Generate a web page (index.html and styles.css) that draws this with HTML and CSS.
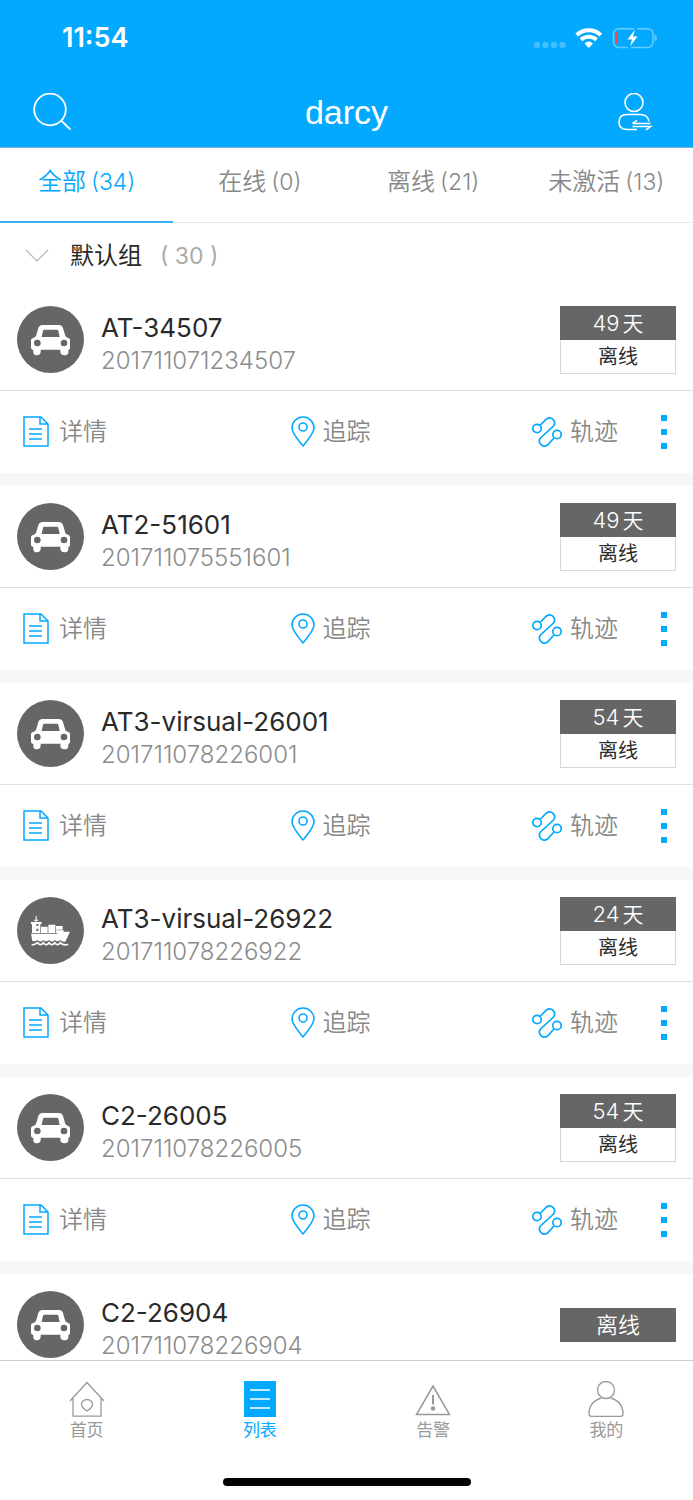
FILE: index.html
```html
<!DOCTYPE html>
<html lang="zh-CN">
<head>
<meta charset="utf-8">
<meta name="viewport" content="width=device-width, initial-scale=1">
<title>darcy</title>
<link rel="stylesheet" href="styles.css">
</head>
<body>
<svg class="sprite" aria-hidden="true">
  <symbol id="car" viewBox="0 0 201 201">
    <path fill="#fff" fill-rule="evenodd" d="M77 57H125Q135 57 138 66L145 90Q148 95 154 96Q159 97 159 103V127Q159 131 154 132V140Q152 148 142 148Q132 148 130 139V131H71V139Q69 148 60 148Q51 148 49 140V132Q42 131 42 126V103Q42 97 48 96Q54 95 57 90L64 66Q67 57 77 57ZM82 71Q79 71 78 74L74 93H128L124 74Q123 71 120 71Z"/>
    <circle cx="61" cy="111" r="10" fill="#666"/><circle cx="141" cy="111" r="10" fill="#666"/>
  </symbol>
  <symbol id="ship" viewBox="0 0 201 201">
    <path fill="#fff" d="M56 57h3v11h5v3h-5v4h16l-3 7h-2v26H45V82h-2l-2-7h15v-4h-5v-3h5z"/>
    <path fill="#fff" d="M72 89h20v19H72zM94 83h21v25H94zM117 87h20v11h-20zM117 100h23v8h-23z"/>
    <path fill="#fff" d="M42 110H120L125 104H159L145 134Q136 136 130 129Q122 137 113 129Q105 138 96 129Q88 137 79 129Q71 138 62 129Q55 135 46 132Z"/>
    <path fill="none" stroke="#fff" stroke-width="5" d="M44 144Q54 143 62 137Q71 149 79 137Q88 149 96 137Q105 149 113 137Q122 149 130 137Q139 147 154 142"/>
    <path fill="#666" d="M58 81h6v6h-6zM58 95h6v7h-6z"/>
  </symbol>
  <symbol id="doc" viewBox="0 0 26 32">
    <path fill="none" stroke="currentColor" stroke-width="1.5" d="M1 1H18L25 8V30H1ZM17 1V8H25M6 13H19M6 18H19M6 23H19"/>
  </symbol>
  <symbol id="pin" viewBox="0 0 24 32">
    <path fill="none" stroke="currentColor" stroke-width="1.6" stroke-linejoin="round" d="M12 30Q1 17 1 12A11 11 0 0 1 23 12Q23 17 12 30Z"/>
    <circle cx="12" cy="11" r="4" fill="none" stroke="currentColor" stroke-width="1.6"/>
  </symbol>
  <symbol id="track" viewBox="0 0 30 32">
    <g fill="none" stroke="currentColor" stroke-width="1.7"><circle cx="5" cy="12.500" r="4.200"/><circle cx="25" cy="18.500" r="4.200"/>
    <path d="M8 9.500L14.500 3A5 5 0 0 1 21.500 10L8.500 22A5 5 0 0 0 15.500 29L22 22"/></g>
  </symbol>
  <symbol id="more" viewBox="0 0 6 34">
    <path fill="currentColor" d="M0 0h6v6H0zM0 14h6v6H0zM0 28h6v6H0z"/>
  </symbol>
</svg>

<div class="app">
  <header class="header">
    <div class="status">
      <span class="time">11:54</span>
      <svg class="status-icons" viewBox="0 0 123 22" aria-hidden="true">
        <g fill="#fff" fill-opacity=".25"><rect x="0" y="15" width="6" height="6" rx="2"/><rect x="8.500" y="15" width="6" height="6" rx="2"/><rect x="17" y="15" width="6" height="6" rx="2"/><rect x="25.500" y="15" width="6" height="6" rx="2"/></g>
        <g fill="none" stroke="#fff" stroke-width="4"><path d="M42.700 8A17.500 17.500 0 0 1 66.800 8"/><path d="M47 12.800A11.500 11.500 0 0 1 62.500 12.800"/></g>
        <path fill="#fff" d="M54.750 21L50.500 16.500Q54.750 12.500 59 16.500Z"/>
        <path fill="none" stroke="#fff" stroke-opacity=".4" stroke-width="1.500" d="M100 1.700H85.500Q79.500 1.700 79.500 7.700V14.500Q79.500 20.500 85.500 20.500H94M103 1.700H113Q119 1.700 119 7.700V14.500Q119 20.500 113 20.500H97"/>
        <path fill="#fff" fill-opacity=".4" d="M120.500 7.500Q123 9 123 11T120.500 14.500Z"/>
        <rect x="82" y="5" width="2" height="12" rx="1" fill="#ff4338"/>
        <path fill="#fff" d="M101 2.500L93.500 12.500H98L96 19.500L103.500 9.500H99Z"/>
      </svg>
    </div>
    <div class="titlebar">
      <button class="icon-button" type="button" aria-label="搜索">
        <svg class="nav-icon" viewBox="0 0 38 38"><g fill="none" stroke="#fff" stroke-width="1.800"><circle cx="17" cy="16.500" r="15.800"/><path d="M28 27.500L37.500 36.500"/></g></svg>
      </button>
      <h1 class="title">darcy</h1>
      <button class="icon-button" type="button" aria-label="切换用户">
        <svg class="nav-icon wide" viewBox="2 0 44 38"><g fill="none" stroke="#fff" stroke-width="1.600"><circle cx="20" cy="9.500" r="9"/><path d="M23 36.500H13Q5 36.500 5 29T13 21.500H26Q34 21.500 35 28.500M18.500 30.500H36.500M18.500 33.500H36.500L32 36.800M18.500 30.500L23 27.500"/></g></svg>
      </button>
    </div>
  </header>

  <nav class="filters" aria-label="状态">
    <button class="filter active" type="button">全部<span>(34)</span></button>
    <button class="filter" type="button">在线<span>(0)</span></button>
    <button class="filter" type="button">离线<span>(21)</span></button>
    <button class="filter" type="button">未激活<span>(13)</span></button>
  </nav>

  <main class="list">
    <button class="group" type="button">
      <svg class="chevron" viewBox="0 0 24 14" aria-hidden="true"><path fill="none" stroke="#bbb" stroke-width="1.300" d="M1 1L12 12L23 1"/></svg>
      <span class="group-name">默认组</span><span class="group-count">( 30 )</span>
    </button>

    <article class="card">
      <div class="info">
        <svg class="avatar"><use href="#car"/></svg>
        <div class="device"><h2 class="name">AT-34507</h2><p class="serial">201711071234507</p></div>
        <div class="badge"><span class="days">49<i>天</i></span><span class="state">离线</span></div>
      </div>
      <div class="actions">
        <div class="links">
          <button class="action" type="button"><svg class="doc"><use href="#doc"/></svg>详情</button>
          <button class="action" type="button"><svg class="pin"><use href="#pin"/></svg>追踪</button>
          <button class="action" type="button"><svg class="track"><use href="#track"/></svg>轨迹</button>
        </div>
        <button class="more" type="button" aria-label="更多"><svg class="dots"><use href="#more"/></svg></button>
      </div>
    </article>

    <article class="card">
      <div class="info">
        <svg class="avatar"><use href="#car"/></svg>
        <div class="device"><h2 class="name">AT2-51601</h2><p class="serial">201711075551601</p></div>
        <div class="badge"><span class="days">49<i>天</i></span><span class="state">离线</span></div>
      </div>
      <div class="actions">
        <div class="links">
          <button class="action" type="button"><svg class="doc"><use href="#doc"/></svg>详情</button>
          <button class="action" type="button"><svg class="pin"><use href="#pin"/></svg>追踪</button>
          <button class="action" type="button"><svg class="track"><use href="#track"/></svg>轨迹</button>
        </div>
        <button class="more" type="button" aria-label="更多"><svg class="dots"><use href="#more"/></svg></button>
      </div>
    </article>

    <article class="card">
      <div class="info">
        <svg class="avatar"><use href="#car"/></svg>
        <div class="device"><h2 class="name">AT3-virsual-26001</h2><p class="serial">201711078226001</p></div>
        <div class="badge"><span class="days">54<i>天</i></span><span class="state">离线</span></div>
      </div>
      <div class="actions">
        <div class="links">
          <button class="action" type="button"><svg class="doc"><use href="#doc"/></svg>详情</button>
          <button class="action" type="button"><svg class="pin"><use href="#pin"/></svg>追踪</button>
          <button class="action" type="button"><svg class="track"><use href="#track"/></svg>轨迹</button>
        </div>
        <button class="more" type="button" aria-label="更多"><svg class="dots"><use href="#more"/></svg></button>
      </div>
    </article>

    <article class="card">
      <div class="info">
        <svg class="avatar"><use href="#ship"/></svg>
        <div class="device"><h2 class="name">AT3-virsual-26922</h2><p class="serial">201711078226922</p></div>
        <div class="badge"><span class="days">24<i>天</i></span><span class="state">离线</span></div>
      </div>
      <div class="actions">
        <div class="links">
          <button class="action" type="button"><svg class="doc"><use href="#doc"/></svg>详情</button>
          <button class="action" type="button"><svg class="pin"><use href="#pin"/></svg>追踪</button>
          <button class="action" type="button"><svg class="track"><use href="#track"/></svg>轨迹</button>
        </div>
        <button class="more" type="button" aria-label="更多"><svg class="dots"><use href="#more"/></svg></button>
      </div>
    </article>

    <article class="card">
      <div class="info">
        <svg class="avatar"><use href="#car"/></svg>
        <div class="device"><h2 class="name">C2-26005</h2><p class="serial">201711078226005</p></div>
        <div class="badge"><span class="days">54<i>天</i></span><span class="state">离线</span></div>
      </div>
      <div class="actions">
        <div class="links">
          <button class="action" type="button"><svg class="doc"><use href="#doc"/></svg>详情</button>
          <button class="action" type="button"><svg class="pin"><use href="#pin"/></svg>追踪</button>
          <button class="action" type="button"><svg class="track"><use href="#track"/></svg>轨迹</button>
        </div>
        <button class="more" type="button" aria-label="更多"><svg class="dots"><use href="#more"/></svg></button>
      </div>
    </article>

    <article class="card">
      <div class="info">
        <svg class="avatar"><use href="#car"/></svg>
        <div class="device"><h2 class="name">C2-26904</h2><p class="serial">201711078226904</p></div>
        <div class="badge"><span class="days">离线</span></div>
      </div>
    </article>
  </main>

  <footer class="footer">
    <nav class="tabbar" aria-label="主导航">
      <button class="tab" type="button">
        <svg class="tab-icon" viewBox="0 0 36 36"><g fill="none" stroke="currentColor" stroke-width="1.300"><path d="M1 20L18 1.500L35 20M4 17.500V35.200H32V17.500"/><path d="M18 30Q12.500 26.500 12.500 23.500A5.500 5 0 0 1 23.500 23.500Q23.500 26.500 18 30Z"/></g></svg>
        首页
      </button>
      <button class="tab current" type="button" aria-current="page">
        <svg class="tab-icon" viewBox="0 0 36 36"><path fill="currentColor" d="M2 0H34V36H2Z"/><path stroke="#fff" stroke-width="1.500" d="M8 9H28M8 18H28M8 27H28"/></svg>
        列表
      </button>
      <button class="tab" type="button">
        <svg class="tab-icon" viewBox="0 0 36 36"><path fill="none" stroke="currentColor" stroke-width="1.500" d="M18 5L34.500 33.500H1.500Z"/><path stroke="currentColor" stroke-width="2" d="M18 14V23.500"/><circle cx="18" cy="27.500" r="2.200" fill="currentColor"/></svg>
        告警
      </button>
      <button class="tab" type="button">
        <svg class="tab-icon" viewBox="0 0 36 36"><g fill="none" stroke="currentColor" stroke-width="1.300"><circle cx="18" cy="9" r="8.500"/><path d="M13.500 17Q1 20.500 1 33Q1 35.300 3.500 35.300H32.500Q35 35.300 35 33Q35 20.500 22.500 17"/></g></svg>
        我的
      </button>
    </nav>
    <div class="home-indicator"></div>
  </footer>
</div>
</body>
</html>
```

FILE: styles.css
```css
* { box-sizing: border-box; }

body {
  margin: 0;
  background: #fff;
  color: #2a2a2a;
  font-family: Inter, "Noto Sans CJK SC", sans-serif;
  font-size: 24px;
  font-weight: 400;
  line-height: 32px;
}

h1, h2, p { margin: 0; font-weight: 400; }

button {
  margin: 0;
  padding: 0;
  border: 0;
  background: none;
  color: inherit;
  font: inherit;
}

svg { display: block; flex: none; }
.sprite { position: absolute; width: 0; height: 0; }

.app { display: flex; flex-direction: column; height: 100vh; }

/* Header */
.header {
  flex: none;
  background: #03a9ff;
  color: #fff;
  border-bottom: 1px solid #6fb4dc;
}
.status {
  display: flex;
  justify-content: space-between;
  align-items: center;
  height: 76px;
  padding: 0 36px 0 62px;
}
.time { font-size: 27px; font-weight: 600; }
.status-icons { width: 123px; height: 22px; }
.titlebar {
  display: grid;
  grid-template-columns: 1fr auto 1fr;
  align-items: center;
  height: 71px;
  padding: 0 33px;
}
.icon-button:last-child { justify-self: end; }
.nav-icon { width: 38px; height: 38px; }
.nav-icon.wide { width: 44px; }
.title { font-family: "Liberation Sans", Arial, sans-serif; font-size: 34px; line-height: 40px; }

/* Filter tabs */
.filters {
  display: grid;
  grid-template-columns: repeat(4, 1fr);
  flex: none;
  height: 75px;
  box-shadow: inset 0 -1px #e8e8e8;
}
.filter {
  padding-bottom: 6px;
  color: #888;
  border-bottom: 2px solid transparent;
  font-weight: 350;
}
.filter span { margin-left: 5px; font-size: 23px; }
.filter.active { color: #03a9ff; border-color: #37b0f5; }

/* Device list */
.list { flex: 1; min-height: 0; overflow: auto; scrollbar-width: none; }
.group {
  display: flex;
  align-items: center;
  width: 100%;
  height: 66px;
  padding: 0 25px;
}
.chevron { width: 24px; height: 14px; margin-right: 21px; }
.group-name { margin-right: 18px; }
.group-count { color: #aaa; font-size: 23px; }

.card { border-bottom: 13px solid #f7f7f7; }
.info {
  display: flex;
  align-items: center;
  gap: 17px;
  height: 102px;
  padding: 0 17px;
  border-bottom: 1px solid #e0e0e0;
}
.avatar { width: 67px; height: 67px; border-radius: 50%; background: #666; }
.device { flex: 1; min-width: 0; padding-top: 8px; }
.name { font-size: 26px; line-height: 34px; }
.serial { color: #8c8c8c; font-weight: 350; }

.badge { width: 116px; font-size: 20px; text-align: center; }
.badge span { display: block; height: 34px; line-height: 34px; }
.days { background: #666; color: #fff; font-size: 22px; font-weight: 350; }
.days i { margin-left: 3px; font-size: 21px; font-style: normal; }
.state { border: 1px solid #d8d8d8; border-top: 0; }

.actions { display: flex; height: 82px; color: #888; }
.links {
  flex: 1;
  display: grid;
  grid-template-columns: 1fr auto 1fr;
  align-items: center;
  padding-left: 23px;
}
.action { display: flex; align-items: center; gap: 8px; font-weight: 350; }
.action svg { height: 32px; color: #03a9ff; }
.action:first-child { gap: 10px; }
.action:last-child { justify-self: end; margin-right: 20px; }
.doc { width: 26px; }
.pin { width: 24px; }
.track { width: 30px; }
.more { display: flex; justify-content: center; align-items: center; width: 55px; padding-right: 3px; color: #03a9ff; }
.dots { width: 6px; height: 34px; }

/* Bottom bar */
.footer { flex: none; height: 140px; border-top: 1px solid #ccc; background: #fff; }
.tabbar { display: grid; grid-template-columns: repeat(4, 1fr); height: 117px; }
.tab {
  display: flex;
  flex-direction: column;
  align-items: center;
  padding-top: 20px;
  color: #999;
  font-size: 17px;
  line-height: 26px;
}
.tab-icon { width: 36px; height: 36px; }
.tab.current { color: #03a9ff; }
.home-indicator { width: 248px; height: 8px; margin: 0 auto; border-radius: 4px; background: #000; }
```
